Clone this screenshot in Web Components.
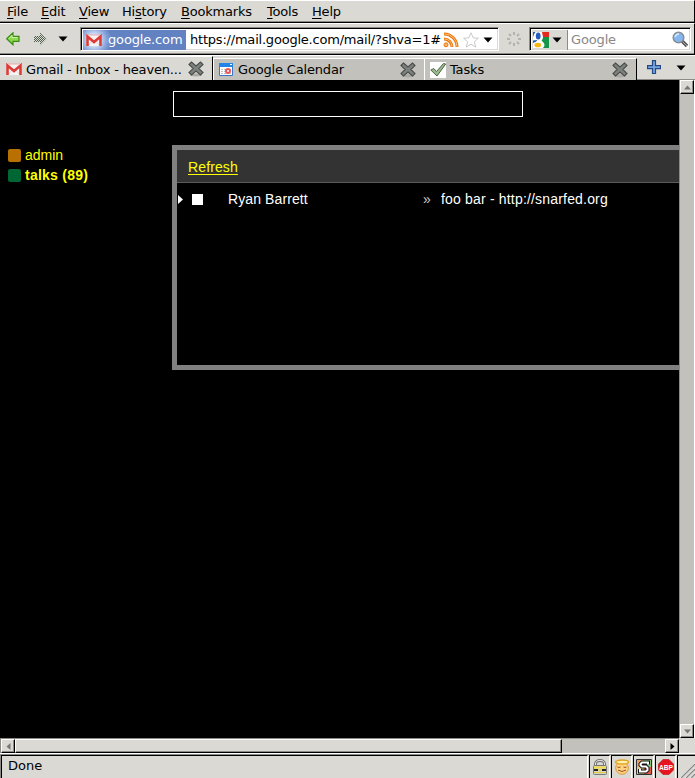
<!DOCTYPE html>
<html lang="en"><head><meta charset="utf-8"><title>Gmail - Inbox</title>
<style>html,body{margin:0;width:695px;height:778px;overflow:hidden;background:#000}</style></head>
<body><browser-window></browser-window>
<script>
const define=(name,css,html,after)=>customElements.define(name,class extends HTMLElement{
  constructor(){super();this.attachShadow({mode:'open'}).innerHTML=`<style>*{box-sizing:border-box}:host{box-sizing:border-box}${css}</style>${html}`;}
  connectedCallback(){if(after)after(this,this.shadowRoot);}
});
const icons={
gmail:`<svg width="16" height="16" viewBox="0 0 16 16"><path d="M0 3h16v11H0z" fill="#f5f3f3"/><path d="M3 13l4-5M13 13L9 8" stroke="#ddd" fill="none"/><path d="M1.500 14V4.500L8 10l6.500-5.500V14" fill="none" stroke="#dc3b38" stroke-width="2.600"/><path d="M2 3h12" stroke="#e9aaa8"/></svg>`,
calendar:`<svg width="16" height="16" viewBox="0 0 16 16"><path d="M1.500 1.500h13v12h-13z" fill="#fff" stroke="#3877c7"/><path d="M1 1h14v4H1z" fill="#2384e8"/><path d="M12 2.500h2" stroke="#fff"/><path d="M3 7.500h10M3 9.500h10M3 11.500h10" stroke="#b9bdc5" stroke-dasharray="2 1"/><circle cx="10" cy="9" r="3" fill="#ec5858"/><circle cx="10" cy="9" r="1" fill="#fff"/></svg>`,
check:`<svg width="16" height="16" viewBox="0 0 16 16"><path d="M0 0h16v16H0z" fill="#fff"/><path d="M.8 8l3-1.500L6.500 9.500 13.500 1.500l2.200.5L7 14z" fill="#9abb89" stroke="#50634a"/></svg>`,
close:`<svg width="16" height="16" viewBox="0 0 16 16"><ellipse cx="8" cy="14" rx="6" ry="1.500" fill="#aaa9a5"/><path d="M1 3.500L3.500 1 8 5l4.500-4L15 3.500 10.800 7.500 15 11.500 12.500 14 8 10l-4.500 4L1 11.500l4.200-4z" fill="#7d817e" stroke="#494d4b" stroke-width="1.100"/></svg>`,
back:`<svg width="14" height="14" viewBox="0 0 14 14"><path d="M.7 6.800L7 .8v3.500h6v5H7v3.500z" fill="#8cda4e" stroke="#3d8c14" stroke-width="1.200"/><path d="M3 6.500l3-3v2h5.500" stroke="#d1f5b0" fill="none"/></svg>`,
forward:`<svg width="14" height="14" viewBox="0 0 14 14"><defs><pattern id="p" width="2" height="2" patternUnits="userSpaceOnUse"><path d="M0 0h1v1H0zM1 1h1v1H1z" fill="#4f604c"/></pattern></defs><path d="M13.500 7L7 .5v3.500H1v6h6V13.500z" fill="url(#p)"/></svg>`,
arrow:`<svg width="10" height="6" viewBox="0 0 10 6"><path d="M.5.500h9L5 5.500z"/></svg>`,
feed:`<svg width="16" height="16" viewBox="0 0 16 16" fill="none"><path d="M1 2a13 13 0 0 1 13 13M1 7a8 8 0 0 1 8 8" stroke="#e9760c" stroke-width="3"/><path d="M1.500 2A12.500 12.500 0 0 1 14 14.500M1.500 7A7.500 7.500 0 0 1 9 14.500" stroke="#ffc178"/><circle cx="3" cy="12.800" r="2" fill="#ffb35f" stroke="#e9760c"/></svg>`,
star:`<svg width="16" height="16" viewBox="0 0 16 16"><path d="M8 .8l2.200 5 5.200.4-4 3.500 1.300 5.400L8 12.200l-4.700 2.900 1.300-5.400-4-3.500 5.200-.4z" fill="#fff" stroke="#c9c9c9"/></svg>`,
spinner:`<svg width="16" height="16" viewBox="0 0 16 16" stroke="#b3b2ac" stroke-width="2"><path d="M8 1v3M8 12v3M1 8h3M12 8h3M3 3l2 2M11 11l2 2M3 13l2-2M11 5l2-2"/></svg>`,
google:`<svg width="16" height="16" viewBox="0 0 16 16"><path d="M0 0h16v16H0z" fill="#fff"/><path d="M0 0h2.500Q.8 2 0 5z" fill="#2659c7"/><path d="M9 0h7v5h-6z" fill="#e72a20"/><path d="M10 5h6v11h-6q3-3 0-6L8.500 8.500Q10 7 10 5z" fill="#16944a"/><ellipse cx="5.200" cy="4" rx="2.400" ry="3.600" fill="#245cc0"/><path d="M0 8.500l4.500-.5q-1 2-4.500 3z" fill="#1b58bd"/><ellipse cx="4.800" cy="13" rx="3.400" ry="2.300" fill="#f7b616"/></svg>`,
search:`<svg width="17" height="17" viewBox="0 0 17 17"><path d="M10 10l5 5" stroke="#595959" stroke-width="3.500"/><path d="M11 11l4 4" stroke="#aaa"/><circle cx="6.500" cy="6.500" r="5.300" fill="#86b6ef" stroke="#888e91" stroke-width="1.500"/><path d="M3 6q1-3 4-3" stroke="#dcecff" stroke-width="1.500" fill="none"/></svg>`,
plus:`<svg width="14" height="14" viewBox="0 0 14 14"><path d="M5.500 .6h3v5h5v3h-5v5h-3v-5h-5v-3h5z" fill="#78a4dc" stroke="#204a87" stroke-width="1.200"/></svg>`,
lock:`<svg width="16" height="16" viewBox="0 0 16 16"><path d="M3.500 8V5a4.500 3.600 0 0 1 9 0v3" fill="none" stroke="#777" stroke-width="3"/><path d="M3.500 8V5a4.500 3.600 0 0 1 9 0v3" fill="none" stroke="#e5e5df"/><rect x="1.500" y="6.500" width="13" height="9" rx="1" fill="#d8d6c3" stroke="#777"/><path d="M2 8.500h12" stroke="#f4dc43" stroke-width="2"/><path d="M2 11h4M10 11h4" stroke="#222" stroke-width="2"/><path d="M6 11h4M2 13.500h12" stroke="#e6cc3d"/></svg>`,
angel:`<svg width="16" height="16" viewBox="0 0 16 16"><circle cx="8" cy="9" r="6.300" fill="#ffd381" stroke="#df973f"/><ellipse cx="8" cy="3" rx="6.500" ry="2" fill="#fff2b0" stroke="#dfa51f" stroke-width="1.300"/><path d="M3.500 8q1.500 1 3 0M9.500 8q1.500 1 3 0M4 11q4 3 8 0" fill="none" stroke="#97551c"/></svg>`,
stylish:`<svg width="16" height="16" viewBox="0 0 16 16"><path d="M.5.500h7.500v7.500H.5z" fill="#eda36c"/><path d="M8 .5h7.500V8H8z" fill="#8bc779"/><path d="M.5 8H8v7.500H.5z" fill="#d9ce90"/><path d="M8 8h7.500v7.500H8z" fill="#e45645"/><path d="M.5.500h15v15H.5z" fill="none" stroke="#333"/><path d="M12 5.500V3.500H6L4.500 5v1L6 7.500h4L11.500 9v2L10 12.500H4V10" fill="none" stroke="#111" stroke-width="4"/><path d="M12 5.500V3.500H6L4.500 5v1L6 7.500h4L11.500 9v2L10 12.500H4V10" fill="none" stroke="#fff" stroke-width="2"/></svg>`,
abp:`<svg width="16" height="16" viewBox="0 0 16 16"><path d="M5 .5h6L15.500 5v6L11 15.500H5L.5 11V5z" fill="#e6141c" stroke="#b70e15" stroke-width=".6"/><text x="8" y="11" text-anchor="middle" textLength="14" lengthAdjust="spacingAndGlyphs" font-family="Liberation Sans" font-weight="bold" font-size="8" fill="#fff">ABP</text></svg>`,
grip:`<svg width="16" height="16" viewBox="0 0 16 16"><path d="M1 16L16 1M6 16L16 6M11 16l5-5" stroke="#fff"/><path d="M2 16L16 2M7 16l9-9M12 16l4-4" stroke="#888" stroke-width="1.300"/></svg>`
};
define('ui-icon',':host{display:block;flex:none}svg{display:block}','',(h,r)=>{r.innerHTML=r.querySelector('style').outerHTML+icons[h.getAttribute('name')];});
define('menu-item',':host{display:block;white-space:nowrap;flex:none}','<span><slot></slot></span>');
define('menu-bar',`:host{display:flex;flex:none;height:23px;padding:3px 0 0 7px;line-height:15px;letter-spacing:-.2px;border-top:1px solid #fff;border-bottom:1px solid #000;box-shadow:inset 0 -1px #8c8b86;border-right:1px solid #000}u{text-decoration-thickness:1px;text-underline-offset:2px}`,
`<menu-item style="width:34px"><u>F</u>ile</menu-item><menu-item style="width:38px"><u>E</u>dit</menu-item><menu-item style="width:43px"><u>V</u>iew</menu-item><menu-item style="width:59px">Hi<u>s</u>tory</menu-item><menu-item style="width:86px"><u>B</u>ookmarks</menu-item><menu-item style="width:45px"><u>T</u>ools</menu-item><menu-item><u>H</u>elp</menu-item>`);
define('address-bar',`:host{display:flex;flex:none;width:419px;height:24px;background:#fff;border:1px solid;border-color:#8c8b86 #fff #fff #8c8b86;box-shadow:inset 1px 1px #000,inset -1px -1px #dad9d4;padding:2px 1px 1px 2px;align-items:center}
.site{display:flex;flex:none;align-items:center;width:103px;height:20px;background:radial-gradient(circle at 11px 10px,#d9e4fa 5px,#83a1d8 13px,#6282c2 18px);color:#fff;padding-left:3px;gap:6px;letter-spacing:-.15px}.url{flex:none;width:257px;padding-left:4px;letter-spacing:-.21px;color:#000;white-space:nowrap}`,
`<div class="site"><ui-icon name="gmail"></ui-icon>google.com</div><div class="url">https://mail.google.com/mail/?shva=1#</div><ui-icon name="feed"></ui-icon><ui-icon name="star" style="margin-left:4px"></ui-icon><ui-icon style="margin-left:4px" name="arrow"></ui-icon>`);
define('search-box',`:host{display:flex;flex:none;align-items:center;width:162px;height:24px;background:#fff;border:1px solid;border-color:#8c8b86 #fff #fff #8c8b86;box-shadow:inset 1px 1px #000,inset -1px -1px #dad9d4;padding:2px 1px 1px 2px;color:#888}.engine{flex:none;height:20px;width:36px;background:#dad9d4;border-right:1px solid #8c8b86;display:flex;align-items:center;padding-left:1px;gap:3px}span{padding-left:3px;letter-spacing:-.15px;width:104px}`,
`<div class="engine"><ui-icon name="google"></ui-icon><ui-icon name="arrow"></ui-icon></div><span>Google</span><ui-icon name="search"></ui-icon>`);
define('nav-bar',`:host{display:flex;flex:none;align-items:center;height:32px;border-top:1px solid #fff;border-bottom:1px solid #000;border-right:1px solid #000;box-shadow:inset 0 -1px #8c8b86;padding-left:6px}`,
`<ui-icon name="back"></ui-icon><ui-icon name="forward" style="margin-left:13px"></ui-icon><ui-icon name="arrow" style="margin:0 12px 0 11px"></ui-icon><address-bar></address-bar><ui-icon name="spinner" style="margin:0 7px"></ui-icon><search-box></search-box>`);
define('browser-tab',`:host{display:flex;height:22px;margin-top:2px;background:#c2c1bb;border-top:1px solid #fff;border-left:1px solid #fff;align-items:center;padding:0 8px 0 4px;flex:none;letter-spacing:-.17px}:host([active]){background:#dad9d4;height:25px;margin-top:0;border-left:0;padding-left:6px}.t{flex:1;padding-left:4px;white-space:nowrap}`,
`<ui-icon></ui-icon><div class="t"><slot></slot></div><ui-icon name="close"></ui-icon>`,(h,r)=>{const i=r.querySelector('ui-icon');const n=document.createElement('ui-icon');n.setAttribute('name',h.getAttribute('icon'));i.replaceWith(n);});
define('tab-strip',`:host{display:flex;flex:none;height:25px;align-items:flex-start;border-top:1px solid #fff;border-bottom:1px solid #8c8b86}ui-icon{align-self:center}`,
`<browser-tab active icon="gmail" style="width:213px;border-right:1px solid #000">Gmail - Inbox - heaven...</browser-tab><browser-tab icon="calendar" style="width:211px">Google Calendar</browser-tab><browser-tab icon="check" style="width:213px;padding-left:5px;border-right:1px solid #000">Tasks</browser-tab><ui-icon name="plus" style="margin:0 0 2px 10px"></ui-icon><ui-icon name="arrow" style="margin-left:15px"></ui-icon>`);
define('mail-label',`:host{display:flex;align-items:center;height:20px;color:#ff0;white-space:nowrap}i{width:13px;height:13px;border-radius:2px;background:var(--swatch);margin-right:4px}`,`<i></i><slot></slot>`);
define('mail-list',`:host{display:block;width:507px;height:225px;border:5px solid #808080;border-right:0}.bar{height:33px;background:#333;border-bottom:1px solid #5a5a5a;padding:9px 0 0 11px;line-height:16px;color:#ff0;letter-spacing:.12px}a{text-decoration:underline;text-decoration-thickness:1px;text-underline-offset:2px}.row{display:grid;grid-template-columns:14px 36px 195px 18px auto;align-items:center;height:32px;padding-left:1px;line-height:16px}.row svg{display:block}.box{width:11px;height:11px;background:#fff}`,
`<div class="bar"><a>Refresh</a></div><div class="row"><svg width="5" height="9"><path d="M0 0l5 4.500L0 9z" fill="#fff"/></svg><div class="box"></div><span style="letter-spacing:.1px">Ryan Barrett</span><span style="color:#ccc">»</span><span style="letter-spacing:.18px">foo bar - http://snarfed.org</span></div>`);
define('mail-page',`:host{display:grid;grid-template-columns:164px 507px;grid-template-rows:54px auto;align-content:start;background:#000;color:#fff;font:14px "Liberation Sans",sans-serif;padding:11px 0 0 8px;overflow:hidden}.q{grid-column:2;width:350px;height:26px;margin-left:1px;border:1px solid #fff}`,
`<div class="q"></div><div style="grid-column:1"><mail-label style="--swatch:#b87000">admin</mail-label><mail-label style="--swatch:#006633;font-weight:bold;letter-spacing:.25px">talks (89)</mail-label></div><mail-list></mail-list>`);
define('scroll-button',`:host{display:grid;place-items:center;background:#dad9d4;border:1px solid;border-color:#fff #000 #000 #fff;box-shadow:inset -1px -1px #8c8b86;width:14px;height:14px;flex:none}svg{display:block}`,`<svg width="7" height="7" viewBox="0 0 7 7"><path d="M0 5.500h7L3.500 1.500z"/></svg>`,(h,r)=>{const s=r.querySelector('svg');s.style.transform=`rotate(${h.getAttribute('turn')||0}deg)`;s.style.fill=h.hasAttribute('live')?'#000':'#777';});
define('scroll-bar',`:host{display:flex;background:#c2c1bb}:host([vertical]){flex-direction:column;justify-content:space-between;border-left:1px solid #8c8b86;border-right:1px solid #fff}:host([horizontal]){border-top:1px solid #8c8b86;border-left:1px solid #8c8b86}`,`<slot></slot>`);
define('status-cell',`:host{display:grid;place-items:center;width:21px;height:23px;border-left:1px solid #000;border-top:1px solid #000;border-right:1px solid #fff;margin-left:1px;flex:none}`,`<slot></slot>`);
define('status-bar',`:host{display:flex;flex:none;height:25px;padding:1px 0 0 1px;border-top:1px solid #fff;box-shadow:inset 0 1px #8c8b86,inset 1px 0 #8c8b86}.msg{flex:1;border-top:1px solid #000;border-left:1px solid #000;border-right:1px solid #fff;padding:2px 0 0 6px;line-height:15px}`,
`<div class="msg">Done</div>${['lock','angel','stylish','abp'].map(n=>`<status-cell><ui-icon name="${n}"></ui-icon></status-cell>`).join('')}<status-cell style="width:18px;border-right:0;place-items:end"><ui-icon name="grip"></ui-icon></status-cell>`);
define('browser-window',`:host{display:flex;flex-direction:column;width:695px;height:778px;background:#dad9d4;color:#000;font:13px "DejaVu Sans",sans-serif}.body{display:grid;flex:none;grid-template-columns:679px 16px;grid-template-rows:658px 15px}.thumb{width:547px;height:14px;background:#dad9d4;border:1px solid;border-color:#fff #000 #000 #fff;box-shadow:inset -1px -1px #8c8b86}`,
`<menu-bar></menu-bar><nav-bar></nav-bar><tab-strip></tab-strip><div class="body"><mail-page></mail-page><scroll-bar vertical><scroll-button></scroll-button><scroll-button turn="180"></scroll-button></scroll-bar><scroll-bar horizontal><scroll-button turn="-90"></scroll-button><div class="thumb"></div><scroll-button turn="90" live style="margin-left:auto"></scroll-button></scroll-bar><div></div></div><status-bar></status-bar>`);
</script></body></html>
